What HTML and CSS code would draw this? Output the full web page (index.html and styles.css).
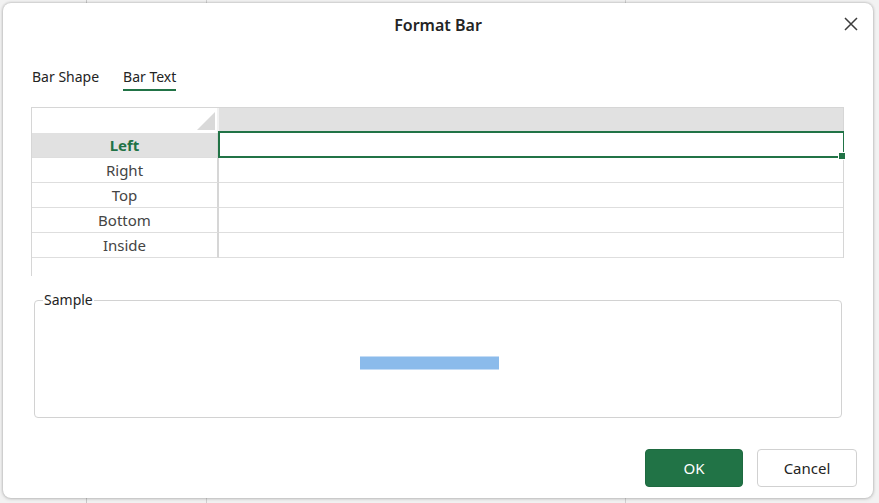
FILE: index.html
```html
<!DOCTYPE html>
<html lang="en">
<head>
<meta charset="utf-8">
<title>Format Bar</title>
<link rel="stylesheet" href="styles.css">
</head>
<body>
<div class="dialog">
  <div class="dialog-header">
    <h1 class="dialog-title">Format Bar</h1>
    <button class="close-btn" aria-label="Close">
      <svg width="14" height="14" viewBox="0 0 14 14"><path d="M1 1L13 13M13 1L1 13" stroke="#3c3c3c" stroke-width="1.5" fill="none"/></svg>
    </button>
  </div>
  <div class="tabs">
    <span class="tab">Bar Shape</span>
    <span class="tab tab-active">Bar Text</span>
  </div>
  <div class="sheet">
    <div class="sheet-row sheet-head">
      <div class="corner"><span class="corner-tri"></span></div>
      <div class="col-head"></div>
    </div>
    <div class="sheet-row">
      <div class="row-head row-head-active">Left</div>
      <div class="cell cell-selected"></div>
    </div>
    <div class="sheet-row">
      <div class="row-head">Right</div>
      <div class="cell"></div>
    </div>
    <div class="sheet-row">
      <div class="row-head">Top</div>
      <div class="cell"></div>
    </div>
    <div class="sheet-row">
      <div class="row-head">Bottom</div>
      <div class="cell"></div>
    </div>
    <div class="sheet-row">
      <div class="row-head">Inside</div>
      <div class="cell"></div>
    </div>
  </div>
  <fieldset class="sample">
    <legend>Sample</legend>
    <div class="sample-body">
      <div class="sample-bar"></div>
    </div>
  </fieldset>
  <div class="actions">
    <button class="btn btn-primary">OK</button>
    <button class="btn btn-secondary">Cancel</button>
  </div>
</div>
</body>
</html>
```

FILE: styles.css
```css
* { box-sizing: border-box; }

html, body {
  margin: 0;
  padding: 0;
}

body {
  width: 879px;
  height: 503px;
  overflow: hidden;
  font-family: "Noto Sans", "Liberation Sans", sans-serif;
  background-color: #f2f2f2;
  background-image:
    linear-gradient(to right, transparent 86px, #c8c8c8 86px, #c8c8c8 87px, transparent 87px),
    linear-gradient(to right, transparent 206px, #d0d0d0 206px, #d0d0d0 207px, transparent 207px),
    linear-gradient(to right, transparent 625px, #d0d0d0 625px, #d0d0d0 626px, transparent 626px);
  padding: 3px 0 0 3px;
}

.dialog {
  position: relative;
  width: 870px;
  height: 495px;
  background: #fff;
  border-radius: 8px;
  box-shadow: 0 0 3px rgba(0, 0, 0, 0.28), 0 1px 4px rgba(0, 0, 0, 0.12);
  display: flex;
  flex-direction: column;
}

.dialog-header {
  height: 44px;
  display: flex;
  align-items: center;
  justify-content: center;
}

.dialog-title {
  margin: 0;
  font-size: 16px;
  font-weight: 600;
  color: #242424;
  line-height: 44px;
}

.close-btn {
  position: absolute;
  top: 14px;
  right: 15px;
  width: 14px;
  height: 14px;
  padding: 0;
  border: 0;
  background: transparent;
  display: flex;
}

.tabs {
  display: flex;
  gap: 24px;
  margin: 20px 0 0 29px;
}

.tab {
  font-size: 14px;
  line-height: 20px;
  color: #242424;
  padding-bottom: 2px;
  border-bottom: 2px solid transparent;
}

.tab-active {
  border-bottom-color: #217346;
}

.sheet {
  margin: 16px 0 0 28px;
  width: 813px;
  height: 169px;
  border-left: 1px solid #d6d6d6;
}

.sheet-row {
  display: flex;
  height: 25px;
  border-right: 1px solid #d6d6d6;
}

.sheet-head {
  height: 26px;
  border-top: 1px solid #d6d6d6;
}

.corner {
  position: relative;
  width: 187px;
  background: #fff;
  border-right: 2px solid #f2f2f2;
}

.corner-tri {
  position: absolute;
  right: 2px;
  bottom: 3px;
  width: 0;
  height: 0;
  border-left: 18px solid transparent;
  border-bottom: 18px solid #d9d9d9;
}

.col-head {
  flex: 1;
  background: #e1e1e1;
}

.row-head {
  width: 187px;
  font-size: 15px;
  line-height: 24px;
  text-align: center;
  color: #444;
  border-right: 2px solid #d6d6d6;
  border-bottom: 1px solid #dedede;
}

.row-head-active {
  background: #e1e1e1;
  color: #217346;
  font-weight: 700;
}

.cell {
  position: relative;
  flex: 1;
  border-bottom: 1px solid #dedede;
}

.cell-selected::after {
  content: "";
  position: absolute;
  left: -1px;
  top: -2px;
  right: -1px;
  bottom: -1px;
  border: 2px solid #217346;
  border-right-width: 1px;
}

.cell-selected::before {
  content: "";
  position: absolute;
  right: -2px;
  bottom: -3px;
  width: 6px;
  height: 6px;
  background: #217346;
  border: 1px solid #fff;
  border-right: 0;
  z-index: 1;
}

.sample {
  margin: 15px 0 0 31px;
  width: 808px;
  padding: 0;
  border: 1px solid #d2d2d2;
  border-radius: 4px;
}

.sample legend {
  margin-left: 8px;
  padding: 0 1px;
  font-size: 14px;
  line-height: 18px;
  color: #242424;
}

.sample-body {
  height: 108px;
  padding: 47px 0 0 325px;
}

.sample-bar {
  width: 139px;
  height: 14px;
  background: #8bbbeb;
  border-top: 1px solid #c4dcf5;
  border-bottom: 1px solid #c4dcf5;
}

.actions {
  display: flex;
  justify-content: flex-end;
  gap: 14px;
  margin-top: 31px;
  padding-right: 16px;
}

.btn {
  height: 38px;
  font-family: "Noto Sans", "Liberation Sans", sans-serif;
  font-size: 15px;
  border-radius: 4px;
  padding: 0;
}

.btn-primary {
  width: 98px;
  background: #217346;
  border: 1px solid #1e6a40;
  color: #fff;
}

.btn-secondary {
  width: 100px;
  background: #fff;
  border: 1px solid #d1d1d1;
  color: #242424;
}
```
